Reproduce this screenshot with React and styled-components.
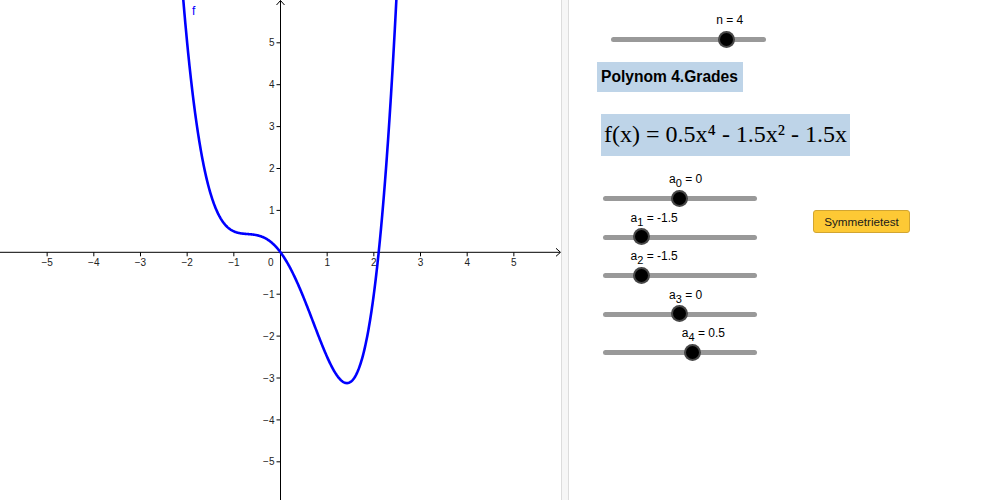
import React from 'react'
import styled, { createGlobalStyle } from 'styled-components'

const GlobalStyle = createGlobalStyle`
  html, body {
    margin: 0;
    padding: 0;
    background: #ffffff;
    font-family: "Liberation Sans", Arial, sans-serif;
  }
`

const Page = styled.div`
  display: flex;
  width: 985px;
  height: 500px;
  overflow: hidden;
  background: #ffffff;
`

const GraphPanel = styled.div`
  width: 561px;
  height: 500px;
  flex: none;
`

const Divider = styled.div`
  width: 6px;
  height: 500px;
  flex: none;
  background: #f6f6f6;
  border-left: 1px solid #dcdcdc;
  border-right: 1px solid #dcdcdc;
`

const SidePanel = styled.div`
  flex: 1;
  display: flex;
  flex-direction: column;
  align-items: flex-start;
  padding-top: 11px;
`

const TitleBox = styled.div`
  margin: 12px 0 0 28px;
  height: 30px;
  padding: 0 5px 0 4px;
  display: flex;
  align-items: center;
  background: #bed4e8;
  color: #000;
  font-weight: bold;
  font-size: 15.6px;
`

const FormulaBox = styled.div`
  margin: 22px 0 0 32px;
  height: 42px;
  padding: 0 3px;
  display: flex;
  align-items: center;
  background: #bed4e8;
  color: #000;
  font-family: "Liberation Serif", "Times New Roman", serif;
  font-size: 24px;
  white-space: nowrap;
`

const LowerRow = styled.div`
  display: flex;
  align-items: flex-start;
  margin-top: 14.5px;
`

const SliderColumn = styled.div`
  display: flex;
  flex-direction: column;
  margin-left: 34px;
`

const SliderBox = styled.div`
  position: relative;
  width: ${p => p.$width}px;
  height: 38.5px;
  margin-left: ${p => p.$offset || 0}px;
  flex: none;
`

const Track = styled.div`
  position: absolute;
  left: 0;
  right: 0;
  top: 26px;
  height: 5px;
  border-radius: 3px;
  background: #999999;
`

const Knob = styled.div`
  position: absolute;
  top: 19.5px;
  width: 13px;
  height: 13px;
  margin-left: -9px;
  border-radius: 50%;
  background: #000;
  border: 2.5px solid rgba(95, 95, 95, 0.75);
`

const SliderLabel = styled.div`
  position: absolute;
  top: 3px;
  font-size: 12px;
  line-height: 12px;
  color: #000;
  white-space: nowrap;
`

const Sub = styled.span`
  font-size: 11px;
  position: relative;
  top: 4px;
`

const TestButton = styled.button`
  margin: 39.5px 0 0 56px;
  width: 97px;
  height: 23px;
  padding: 0;
  border: 1px solid #d2a531;
  border-radius: 3px;
  background: #fdc935;
  color: #1a1a1a;
  font-family: "Liberation Sans", Arial, sans-serif;
  font-size: 11.7px;
  cursor: pointer;
`

const Slider = ({ label, value, min, max, width, offset }) => {
  const pos = ((value - min) / (max - min)) * width
  return (
    <SliderBox $width={width} $offset={offset}>
      <Track />
      <Knob style={{ left: pos }} />
      <SliderLabel style={{ left: pos - 11 }}>{label}</SliderLabel>
    </SliderBox>
  )
}

// graph coordinates
const OX = 280.5
const OY = 252.3
const UX = 46.67
const UY = 41.9
const f = x => 0.5 * x ** 4 - 1.5 * x ** 2 - 1.5 * x

const curvePath = () => {
  const pts = []
  for (let x = -2.4; x <= 2.6; x += 0.01) {
    pts.push(`${(OX + x * UX).toFixed(2)},${(OY - f(x) * UY).toFixed(2)}`)
  }
  return 'M' + pts.join(' L')
}

const minus = n => (n < 0 ? '\u2212' + Math.abs(n) : String(n))

const Graph = () => {
  const xs = [-5, -4, -3, -2, -1, 1, 2, 3, 4, 5]
  const ys = [-5, -4, -3, -2, -1, 1, 2, 3, 4, 5]
  return (
    <svg width="561" height="500" viewBox="0 0 561 500">
      <g stroke="#000" strokeWidth="1" fill="none">
        <line x1="0" y1={OY} x2="560" y2={OY} />
        <line x1={OX} y1="0.5" x2={OX} y2="500" />
        <polyline points={`556,${OY - 4} 560.5,${OY} 556,${OY + 4}`} />
        <polyline points={`${OX - 4},5 ${OX},0.5 ${OX + 4},5`} />
        {xs.map(n => (
          <line key={'tx' + n} x1={OX + n * UX} y1={OY} x2={OX + n * UX} y2={OY + 4} />
        ))}
        {ys.map(n => (
          <line key={'ty' + n} x1={OX - 4} y1={OY - n * UY} x2={OX} y2={OY - n * UY} />
        ))}
      </g>
      <g fill="#222" fontSize="10" fontFamily="Liberation Sans, Arial, sans-serif">
        {xs.map(n => (
          <text key={'lx' + n} x={OX + n * UX} y={OY + 14} textAnchor="middle">
            {minus(n)}
          </text>
        ))}
        {ys.map(n => (
          <text key={'ly' + n} x={OX - 6} y={OY - n * UY + 3.6} textAnchor="end">
            {minus(n)}
          </text>
        ))}
        <text x={OX - 7} y={OY + 14} textAnchor="end">0</text>
      </g>
      <path d={curvePath()} stroke="#0000ff" strokeWidth="2.6" fill="none" strokeLinejoin="round" />
      <text x="192" y="15" fill="#0000ff" fontSize="12" fontFamily="Liberation Sans, Arial, sans-serif">f</text>
    </svg>
  )
}

const coefficients = [
  { i: 0, v: 0 },
  { i: 1, v: -1.5 },
  { i: 2, v: -1.5 },
  { i: 3, v: 0 },
  { i: 4, v: 0.5 },
]

const App = () => {
  return (
    <>
      <GlobalStyle />
      <Page>
        <GraphPanel>
          <Graph />
        </GraphPanel>
        <Divider />
        <SidePanel>
          <Slider label="n = 4" value={4} min={1} max={5} width={155} offset={42} />
          <TitleBox>Polynom 4.Grades</TitleBox>
          <FormulaBox>f(x) = 0.5x⁴ - 1.5x² - 1.5x</FormulaBox>
          <LowerRow>
            <SliderColumn>
              {coefficients.map(c => (
                <Slider
                  key={c.i}
                  label={<>a<Sub>{c.i}</Sub> = {c.v}</>}
                  value={c.v}
                  min={-3}
                  max={3}
                  width={154}
                />
              ))}
            </SliderColumn>
            <TestButton>Symmetrietest</TestButton>
          </LowerRow>
        </SidePanel>
      </Page>
    </>
  )
}

export default App
